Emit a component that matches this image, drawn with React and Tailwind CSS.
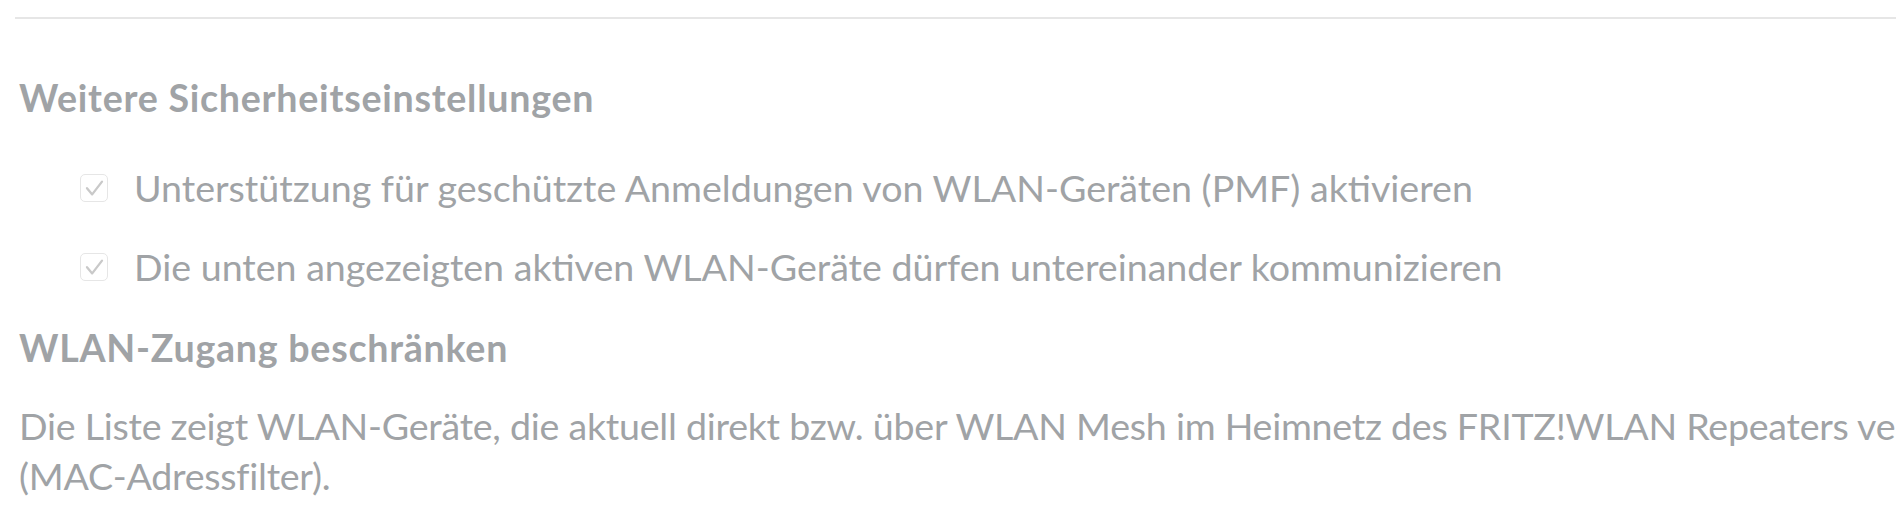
import React from 'react'

const textColor = 'text-[#a0a3a6]'

const CheckRow = ({ label }) => (
  <div className="flex items-center pl-[80px] h-[48px]">
    <span className="flex items-center justify-center w-[28px] h-[28px] shrink-0 rounded-[5px] border border-[#e6e6e6] bg-white">
      <svg width="28" height="28" viewBox="0 0 28 28" fill="none" className="-m-px">
        <path d="M7 14.2l5.2 6.2L22 7.6" stroke="#c9c9c9" strokeWidth="2.3" strokeLinecap="round" strokeLinejoin="round" />
      </svg>
    </span>
    <span className={`ml-[26px] whitespace-nowrap ${textColor}`}>{label}</span>
  </div>
)

export default function App() {
  return (
    <div className="w-full h-[510px] overflow-hidden bg-white text-[37.6px] leading-[48px]" style={{ fontFamily: 'Lato, "Noto Sans", sans-serif' }}>
      <div className="ml-[15px] mt-[17px] h-[2px] bg-[#e6e6e6]" />

      <div className="pl-[19px]">
        <h2 className={`mt-[55px] font-bold tracking-[0.75px] whitespace-nowrap ${textColor}`}>Weitere Sicherheitseinstellungen</h2>
      </div>

      <div className="mt-[42px] flex flex-col gap-[31px]">
        <CheckRow label="Unterstützung für geschützte Anmeldungen von WLAN-Geräten (PMF) aktivieren" />
        <CheckRow label="Die unten angezeigten aktiven WLAN-Geräte dürfen untereinander kommunizieren" />
      </div>

      <div className="pl-[19px]">
        <h2 className={`mt-[33px] font-bold tracking-[0.75px] whitespace-nowrap ${textColor}`}>WLAN-Zugang beschränken</h2>
        <p className={`mt-[29px] leading-[50px] tracking-[-0.25px] whitespace-nowrap ${textColor}`}>
          Die Liste zeigt WLAN-Geräte, die aktuell direkt bzw. über WLAN Mesh im Heimnetz des FRITZ!WLAN Repeaters verbunden sind. Sie können den WLAN-Zugang auf diese Geräte beschränken
          <br />
          (MAC-Adressfilter).
        </p>
      </div>
    </div>
  )
}
